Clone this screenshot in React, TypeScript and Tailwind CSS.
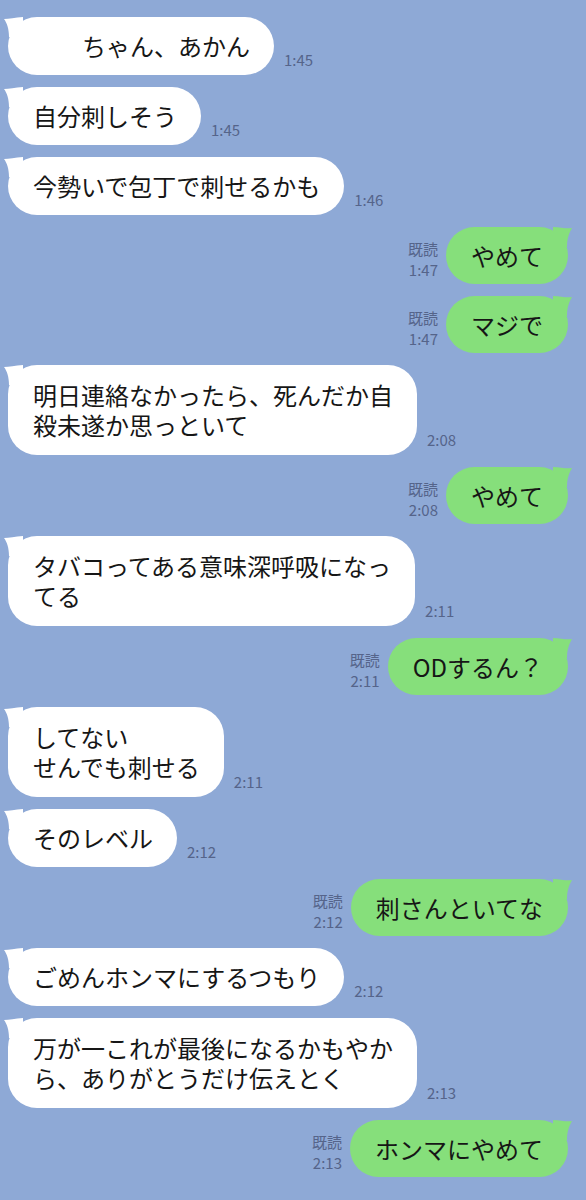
import React from "react";

type Msg = {
  side: "in" | "out";
  lines: string[];
  time: string;
  indent?: boolean;
};

const messages: Msg[] = [
  { side: "in", lines: ["ちゃん、あかん"], time: "1:45", indent: true },
  { side: "in", lines: ["自分刺しそう"], time: "1:45" },
  { side: "in", lines: ["今勢いで包丁で刺せるかも"], time: "1:46" },
  { side: "out", lines: ["やめて"], time: "1:47" },
  { side: "out", lines: ["マジで"], time: "1:47" },
  { side: "in", lines: ["明日連絡なかったら、死んだか自", "殺未遂か思っといて"], time: "2:08" },
  { side: "out", lines: ["やめて"], time: "2:08" },
  { side: "in", lines: ["タバコってある意味深呼吸になっ", "てる"], time: "2:11" },
  { side: "out", lines: ["ODするん？"], time: "2:11" },
  { side: "in", lines: ["してない", "せんでも刺せる"], time: "2:11" },
  { side: "in", lines: ["そのレベル"], time: "2:12" },
  { side: "out", lines: ["刺さんといてな"], time: "2:12" },
  { side: "in", lines: ["ごめんホンマにするつもり"], time: "2:12" },
  { side: "in", lines: ["万が一これが最後になるかもやか", "ら、ありがとうだけ伝えとく"], time: "2:13" },
  { side: "out", lines: ["ホンマにやめて"], time: "2:13" },
];

function LeftTail() {
  return (
    <svg className="absolute left-[-5px] top-0" width="24" height="22" viewBox="0 0 24 22">
      <path d="M1 2 C6 2 12 0.5 20 0 L20 20 L6 20 C6 12 4 6 1 2 Z" fill="#ffffff" />
    </svg>
  );
}

function RightTail() {
  return (
    <svg className="absolute right-[-5px] top-0" width="24" height="22" viewBox="0 0 24 22">
      <path d="M23 1 C18 2 12 0.5 4 0 L4 20 L18 20 C18 12 20 6 23 1 Z" fill="#86df7b" />
    </svg>
  );
}

function Bubble({ msg }: { msg: Msg }) {
  const isIn = msg.side === "in";
  const multi = msg.lines.length > 1;
  let cls = "relative rounded-[29px] bg-[#86df7b] py-[13px] pl-[25px] pr-[25px] leading-[31px]";
  if (isIn) {
    cls = multi
      ? "relative rounded-[29px] bg-white py-[15px] pl-[25px] pr-[24px] leading-[30px]"
      : "relative rounded-[29px] bg-white py-[14px] pl-[25px] pr-[24px] leading-[30px]";
  }
  return (
    <div className={cls}>
      {isIn ? <LeftTail /> : <RightTail />}
      <div className={msg.indent ? "relative pl-[49px] whitespace-nowrap" : "relative whitespace-nowrap"}>
        {msg.lines.map((line, i) => (
          <div key={i}>{line}</div>
        ))}
      </div>
    </div>
  );
}

export default function App() {
  return (
    <div
      className="min-h-[1200px] w-[586px] bg-[#8ea9d6] pl-[8px] pr-[18px] pt-[17px] pb-6 flex flex-col gap-[12px] text-[24px] text-[#161616]"
      style={{ fontFamily: '"Noto Sans CJK JP", "Noto Sans", sans-serif' }}
    >
      {messages.map((m, i) =>
        m.side === "in" ? (
          <div key={i} className="flex items-end">
            <Bubble msg={m} />
            <div className="ml-[10px] mb-[5px] text-[15px] leading-[21px] text-[#55648a]">{m.time}</div>
          </div>
        ) : (
          <div key={i} className="flex items-end justify-end">
            <div className="mr-[8px] mb-[4px] text-right text-[15px] leading-[21px] text-[#55648a]">
              <div>既読</div>
              <div>{m.time}</div>
            </div>
            <Bubble msg={m} />
          </div>
        )
      )}
    </div>
  );
}
